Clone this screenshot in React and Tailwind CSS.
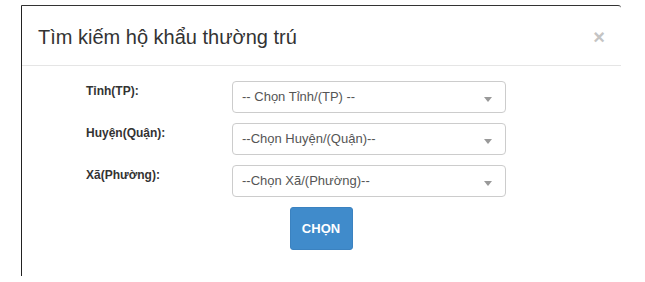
import React from 'react';

const FIELDS = [
  { label: 'Tỉnh(TP):', placeholder: '-- Chọn Tỉnh/(TP) --' },
  { label: 'Huyện(Quận):', placeholder: '--Chọn Huyện/(Quận)--' },
  { label: 'Xã(Phường):', placeholder: '--Chọn Xã/(Phường)--' },
];

function SelectBox({ placeholder }) {
  return (
    <div className="relative w-[274px] h-[32px] border border-[#ccc] rounded-[4px] bg-white flex items-center pl-[9px] text-[13px] text-[#555]">
      <span>{placeholder}</span>
      {/* caret */}
      <span className="absolute right-[13px] top-[15px] w-0 h-0 border-l-[4px] border-r-[4px] border-t-[5px] border-l-transparent border-r-transparent border-t-[#999]" />
    </div>
  );
}

export default function App() {
  return (
    <div className="w-[645px] h-[282px] bg-white pt-[5px] pl-[21px]" style={{ fontFamily: '"Liberation Sans", Arial, sans-serif' }}>
      <div className="w-[600px] h-[271px] bg-white border-l border-t border-l-[#222] border-t-[#333] rounded-tr-[3px]">
        {/* Header */}
        <div className="h-[60px] flex items-center justify-between pl-[16px] pr-[16px] border-b border-[#e5e5e5]">
          <h4 className="text-[20px] text-[#333] pt-[2px]">Tìm kiếm hộ khẩu thường trú</h4>
          <span className="text-[20px] font-bold text-[#c4c4c4] leading-none pt-[3px]">×</span>
        </div>

        {/* Body */}
        <div className="pt-[15px] pl-[64px] flex flex-col gap-[10px]">
          {FIELDS.map((f) => (
            <div key={f.label} className="flex items-start">
              <label className="w-[146px] pt-[2px] leading-[17px] text-[12px] font-bold text-[#333]">{f.label}</label>
              <SelectBox placeholder={f.placeholder} />
            </div>
          ))}
        </div>

        <div className="flex justify-center pt-[10px] pr-[1px]">
          <button className="w-[63px] h-[43px] rounded-[3px] bg-[#408bcb] border border-[#3b82c0] text-white text-[13px] font-bold">
            CHỌN
          </button>
        </div>
      </div>
    </div>
  );
}
